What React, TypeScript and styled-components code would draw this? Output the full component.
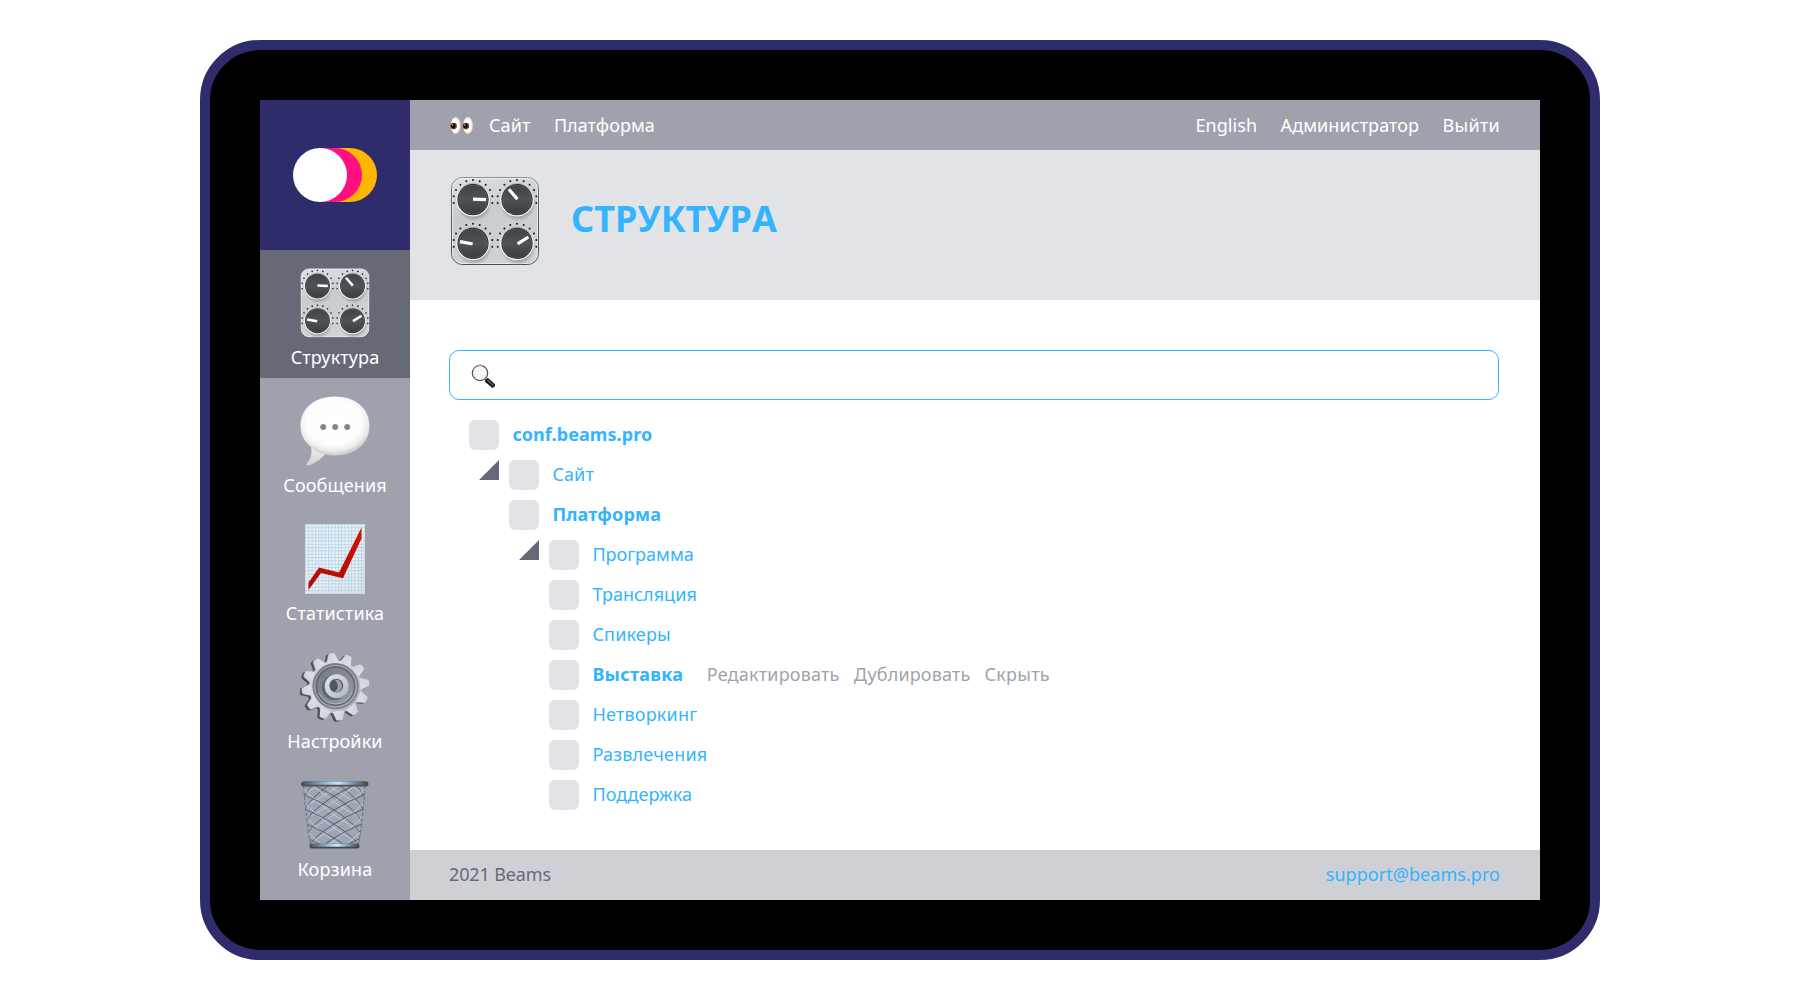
import React from 'react';
import styled, { createGlobalStyle } from 'styled-components';

const GlobalStyle = createGlobalStyle`
  * { box-sizing: border-box; }
  body {
    margin: 0;
    background: #fff;
    font-family: 'Noto Sans', 'Open Sans', sans-serif;
    font-size: 18px;
    line-height: 30px;
  }
`;

const Stage = styled.div`
  height: 1000px;
  display: flex;
  align-items: center;
  justify-content: center;
`;

const Tablet = styled.div`
  width: 1400px;
  height: 920px;
  padding: 50px;
  border: 10px solid #2e2c6b;
  border-radius: 60px;
  background: #000;
`;

const Screen = styled.div`
  width: 100%;
  height: 100%;
  display: flex;
  background: #fff;
`;

const Sidebar = styled.nav`
  width: 150px;
  background: #9fa2ad;
`;

const LogoBox = styled.div`
  height: 150px;
  display: flex;
  align-items: center;
  justify-content: center;
  background: #2e2c6b;
`;

const SideItem = styled.a<{ $active?: boolean }>`
  height: 128px;
  display: flex;
  flex-direction: column;
  align-items: center;
  padding-top: 18px;
  color: #fff;
  background: ${(p) => (p.$active ? '#656a76' : 'transparent')};
`;

const Text = styled.span<{ $track?: number }>`
  letter-spacing: ${(p) => p.$track ?? 0}px;
`;

const SideLabel = styled(Text)`
  margin-top: 4px;
`;

const Main = styled.div`
  flex: 1;
  display: flex;
  flex-direction: column;
`;

const TopBar = styled.div`
  height: 50px;
  padding: 0 40px 0 39px;
  display: flex;
  align-items: center;
  justify-content: space-between;
  color: #fff;
  background: #9fa2ad;
`;

const Links = styled.div`
  display: flex;
  align-items: center;
  gap: 23.4px;
`;

const SiteLink = styled.a`
  display: flex;
  align-items: center;
  gap: 15px;
`;

const Header = styled.header`
  height: 150px;
  padding: 27px 40px 0 41px;
  display: flex;
  align-items: flex-start;
  background: #e2e3e7;
`;

const Title = styled.h1`
  margin: 18px 0 0 32px;
  font-size: 36px;
  line-height: 48px;
  font-weight: 700;
  font-kerning: none;
  color: #34b3ff;
`;

const Content = styled.main`
  flex: 1;
  padding: 50px 41px 0 39px;
`;

const Search = styled.div`
  height: 50px;
  padding: 2px 0 0 21px;
  display: flex;
  align-items: center;
  border: 1px solid #34b3ff;
  border-radius: 10px;
`;

const Tree = styled.div`
  padding: 20px 0 0 20px;
`;

const Branch = styled.div`
  padding-left: 40px;
`;

const Row = styled.div`
  height: 30px;
  margin-bottom: 10px;
  display: flex;
  line-height: 28px;
`;

const Toggle = styled.div`
  width: 20px;
  height: 20px;
  margin: 0 10px 0 -30px;
  background: #656a76;
  clip-path: polygon(100% 0, 100% 100%, 0 100%);
`;

const Box = styled.div`
  width: 30px;
  height: 30px;
  border-radius: 6px;
  background: #e2e3e7;
`;

const NodeLink = styled(Text)<{ $bold?: boolean }>`
  margin-left: 13.4px;
  color: #34b3ff;
  font-weight: ${(p) => (p.$bold ? 700 : 400)};
`;

const Actions = styled.div`
  display: flex;
  gap: 14px;
  margin-left: 23.4px;
  color: #9fa2ad;
`;

const Footer = styled.footer`
  height: 50px;
  padding: 0 40px 2px 39px;
  display: flex;
  align-items: center;
  justify-content: space-between;
  color: #656a76;
  background: #cfd0d6;
`;

const Mail = styled(Text)`
  color: #34b3ff;
`;

const Logo = () => (
  <svg width="84" height="54" viewBox="0 0 84 54">
    <path d="M27 0H57a27 27 0 0 1 0 54H27z" fill="#ffb600" />
    <path d="M27 0H42a27 27 0 0 1 0 54H27z" fill="#ff0f80" />
    <circle cx="27" cy="27" r="27" fill="#fff" />
  </svg>
);

const KNOBS = [
  { x: 22, y: 22.7, from: [0, -0.6], to: [13, 0] },
  { x: 66, y: 22.7, from: [0.4, -0.6], to: [-8.2, -10.4] },
  { x: 22, y: 66.4, from: [-0.4, 0.6], to: [-13, -1.8] },
  { x: 66, y: 66.4, from: [0.6, 0.4], to: [11.4, -6.4] },
];
const DOTS = Array.from({ length: 11 }, (_, i) => ((170 + i * 20) * Math.PI) / 180);

const Knobs = ({ size }: { size: number }) => (
  <svg width={size} height={size} viewBox="0 0 88 88">
    <defs>
      <linearGradient id={`panel${size}`} x1="0" y1="0" x2="0.25" y2="1">
        <stop offset="0" stopColor="#dde2e6" />
        <stop offset="0.45" stopColor="#c6ccd0" />
        <stop offset="1" stopColor="#cdd3d6" />
      </linearGradient>
      <linearGradient id={`edge${size}`} x1="0" y1="0" x2="0" y2="1">
        <stop offset="0" stopColor="#8791a0" />
        <stop offset="0.12" stopColor="#626a76" />
        <stop offset="1" stopColor="#4b4d4e" />
      </linearGradient>
      <linearGradient id={`knob${size}`} x1="0" y1="0" x2="0" y2="1">
        <stop offset="0" stopColor="#3f4347" />
        <stop offset="0.5" stopColor="#4f5357" />
        <stop offset="1" stopColor="#393d40" />
      </linearGradient>
      <linearGradient id={`rim${size}`} x1="0" y1="0" x2="0" y2="1">
        <stop offset="0" stopColor="#a9aeb2" />
        <stop offset="0.4" stopColor="#f5f7f8" />
        <stop offset="1" stopColor="#ffffff" />
      </linearGradient>
      <radialGradient id={`shade${size}`}>
        <stop offset="0.65" stopColor="#7b8286" stopOpacity="0.9" />
        <stop offset="1" stopColor="#9ba2a6" stopOpacity="0" />
      </radialGradient>
    </defs>
    <rect x="0.5" y="0.5" width="87" height="87" rx="11" fill={`url(#panel${size})`} stroke={`url(#edge${size})`} />
    <rect x="1.5" y="1.5" width="85" height="85" rx="10" fill="none" stroke="#fff" strokeOpacity="0.55" />
    {KNOBS.map((k) => (
      <g key={`${k.x}-${k.y}`}>
        <ellipse cx={k.x + 1} cy={k.y + 4} rx="18" ry="18" fill={`url(#shade${size})`} />
        {DOTS.map((a) => (
          <circle key={a} cx={k.x + 19.6 * Math.cos(a)} cy={k.y + 19.6 * Math.sin(a)} r="1" fill="#15181a" />
        ))}
        <circle cx={k.x} cy={k.y} r="16.8" fill={`url(#rim${size})`} />
        <circle cx={k.x} cy={k.y} r="15.6" fill="#202326" />
        <circle cx={k.x} cy={k.y} r="14.6" fill={`url(#knob${size})`} stroke="#666b6f" strokeWidth="0.6" />
        <line
          x1={k.x + k.from[0]}
          y1={k.y + k.from[1]}
          x2={k.x + k.to[0]}
          y2={k.y + k.to[1]}
          stroke="#fff"
          strokeWidth="3.2"
        />
      </g>
    ))}
  </svg>
);

const Bubble = () => (
  <svg width="70" height="70" viewBox="0 0 70 70">
    <defs>
      <radialGradient id="bubble" cx="0.48" cy="0.42" r="0.58">
        <stop offset="0" stopColor="#fff" />
        <stop offset="0.68" stopColor="#fdfdfd" />
        <stop offset="0.86" stopColor="#ededed" />
        <stop offset="1" stopColor="#c9c9ca" />
      </radialGradient>
      <linearGradient id="tail" x1="0" y1="0" x2="0" y2="1">
        <stop offset="0" stopColor="#efefef" />
        <stop offset="1" stopColor="#d2d2d3" />
      </linearGradient>
    </defs>
    <path d="M11 50C12.5 58 10.5 63.5 6.5 68c-.7 1 0 1.700 1 1.500C15 68 22 62.500 26 57z" fill="url(#tail)" />
    <path
      d="M35 .5C55 .5 69.500 12 69.500 30S55 59.500 35 59.500C31.500 59.500 28 59 25 58.200 20 57 15 55 11 51 4 45.500 .5 38.500 .5 30 .5 12 15 .5 35 .5z"
      fill="url(#bubble)"
    />
    <g fill="#858585" stroke="#747474" strokeWidth="0.5">
      <circle cx="23.200" cy="31" r="2.700" />
      <circle cx="35.200" cy="31" r="2.700" />
      <circle cx="47.200" cy="31" r="2.700" />
    </g>
  </svg>
);

const Chart = () => (
  <svg width="70" height="70" viewBox="0 0 70 70">
    <defs>
      <linearGradient id="paper" x1="0" y1="0" x2="1" y2="1">
        <stop offset="0" stopColor="#e6f2fb" />
        <stop offset="0.5" stopColor="#f0f5f9" />
        <stop offset="1" stopColor="#e3e6e9" />
      </linearGradient>
      <linearGradient id="trend" x1="0" y1="0" x2="0" y2="1">
        <stop offset="0" stopColor="#d01405" />
        <stop offset="1" stopColor="#b30a02" />
      </linearGradient>
      <pattern id="grid" x="5" y="0" width="3.300" height="3.300" patternUnits="userSpaceOnUse">
        <path d="M0 .5H3.300M.5 0V3.300" stroke="#b9d4e9" strokeWidth="0.9" />
      </pattern>
    </defs>
    <rect x="5.200" y="0" width="59.500" height="69.700" fill="url(#paper)" />
    <rect x="5.200" y="0" width="59.500" height="69.700" fill="url(#grid)" />
    <rect x="5.600" y=".4" width="58.700" height="68.900" fill="none" stroke="#d4dade" strokeWidth="0.8" />
    <path
      d="M8.500 58.500 19 43.500 39 48.500 61.500 3.500V14.500L43 54.200 21 49 8.500 66z"
      fill="url(#trend)"
    />
  </svg>
);

const TEETH = Array.from({ length: 12 }, (_, i) => -7 + i * 30);

const GearShape = ({ fill }: { fill: string }) => (
  <g fill={fill}>
    <circle cx="36" cy="35" r="26.500" />
    {TEETH.map((a) => (
      <path
        key={a}
        d="M30 10.500 32.600 2.500Q33 1.200 34.300 1.200H37.700Q39 1.200 39.400 2.500L42 10.500z"
        transform={`rotate(${a} 36 35)`}
      />
    ))}
  </g>
);

const Gear = () => (
  <svg width="70" height="70" viewBox="0 0 70 70">
    <defs>
      <linearGradient id="gear" gradientUnits="userSpaceOnUse" x1="12" y1="18" x2="62" y2="52">
        <stop offset="0" stopColor="#c3c8d0" />
        <stop offset="0.3" stopColor="#dcdfe6" />
        <stop offset="0.7" stopColor="#b9bec8" />
        <stop offset="1" stopColor="#a6abb7" />
      </linearGradient>
      <linearGradient id="well" x1="0" y1="0" x2="1" y2="1">
        <stop offset="0" stopColor="#73787e" />
        <stop offset="0.6" stopColor="#898e95" />
        <stop offset="1" stopColor="#a0a5ac" />
      </linearGradient>
      <linearGradient id="hub" x1="0" y1="0" x2="1" y2="1">
        <stop offset="0" stopColor="#dfe3eb" />
        <stop offset="0.6" stopColor="#c6ccd8" />
        <stop offset="1" stopColor="#a4adbb" />
      </linearGradient>
    </defs>
    <g transform="translate(-2.800 1)">
      <GearShape fill="#4b4643" />
    </g>
    <g transform="translate(-1.500 .4)">
      <GearShape fill="#666a70" />
    </g>
    <g transform="translate(-.4 -.2)">
      <GearShape fill="url(#gear)" />
    </g>
    <circle cx="35.500" cy="34.200" r="22.600" fill="url(#well)" stroke="#6b7179" strokeWidth="0.9" />
    <circle cx="35.500" cy="34.200" r="20.800" fill="none" stroke="#a3a8af" strokeWidth="1" />
    <circle cx="35.500" cy="34.200" r="19" fill="none" stroke="#5f646b" strokeWidth="1.300" />
    <path d="M19 41A18 18 0 0 0 52 41" fill="none" stroke="#b9bec5" strokeWidth="0.8" />
    <circle cx="34.500" cy="35.500" r="12.600" fill="#5f656c" />
    <circle cx="36.700" cy="34.300" r="12" fill="url(#hub)" />
    <circle cx="36.300" cy="33.600" r="6.900" fill="#4e5661" />
    <path d="M34.500 27.600a6.400 6.400 0 1 1-.5 12.500c4.500-2.500 5.500-8 .5-12.500z" fill="#9fa2ad" />
  </svg>
);

const MESH = [-1, 0, 1, 2, 3, 4, 5, 6, 7, 8, 9, 10];

const Basket = () => (
  <svg width="70" height="70" viewBox="0 0 70 70">
    <defs>
      <linearGradient id="rimTop" x1="0" y1="0" x2="1" y2="0">
        <stop offset="0" stopColor="#4d5056" />
        <stop offset="0.3" stopColor="#83a9d0" />
        <stop offset="0.55" stopColor="#c8eaff" />
        <stop offset="0.8" stopColor="#6f8fae" />
        <stop offset="1" stopColor="#49443f" />
      </linearGradient>
      <clipPath id="bin">
        <path d="M3.500 5H65Q63 38 58.500 65H10.500Q6 38 3.500 5z" />
      </clipPath>
    </defs>
    <path d="M3.500 5H65Q63 38 58.500 65H10.500Q6 38 3.500 5z" fill="#b5bec9" fillOpacity="0.15" />
    <g clipPath="url(#bin)" fill="none">
      {MESH.map((i) => (
        <g key={i}>
          <path d={`M0 ${i * 13 + 2}Q34 ${i * 13 - 12} 68 ${i * 13 - 46}`} stroke="#b9d0e2" strokeWidth="0.9" />
          <path d={`M68 ${i * 13 + 2}Q34 ${i * 13 - 12} 0 ${i * 13 - 46}`} stroke="#b9d0e2" strokeWidth="0.9" />
          <path d={`M4 ${i * 14 + 2}Q18 ${i * 14 - 22} 66 ${i * 14 - 42}`} stroke="#4a515b" strokeWidth="0.9" />
          <path d={`M64 ${i * 14 + 2}Q50 ${i * 14 - 22} 2 ${i * 14 - 42}`} stroke="#4f5e6e" strokeWidth="0.9" />
        </g>
      ))}
    </g>
    <path
      d="M3.500 5Q6 38 10.500 65M65 5Q63 38 58.500 65"
      stroke="#596c7d"
      strokeWidth="0.9"
      fill="none"
      strokeDasharray="4 1.500"
    />
    <rect x="9.500" y="63.800" width="50" height="4.600" rx="2" fill="#4a4540" />
    <rect x="10" y="63.800" width="49" height="3" rx="1.400" fill="url(#rimTop)" />
    <rect x="1" y="1.600" width="67.500" height="5" rx="2.500" fill="#544f4c" />
    <rect x="2" y="1.600" width="65.500" height="3.200" rx="1.500" fill="url(#rimTop)" />
  </svg>
);

const Eyes = () => (
  <svg width="25" height="20" viewBox="0 0 25 20">
    <defs>
      <radialGradient id="white" cx="0.45">
        <stop offset="0.7" stopColor="#fff" />
        <stop offset="1" stopColor="#dcdcde" />
      </radialGradient>
    </defs>
    {[0, 12.3].map((x) => (
      <g key={x} transform={`translate(${x} .6)`}>
        <ellipse cx="6.700" cy="10" rx="4.900" ry="8.500" fill="url(#white)" />
        <circle cx="4.600" cy="10.500" r="3.300" fill="#80480f" />
        <circle cx="4.300" cy="10.300" r="2.300" fill="#160b06" />
        <circle cx="3.500" cy="9.300" r=".8" fill="#b8aaa0" />
      </g>
    ))}
  </svg>
);

const Lens = () => (
  <svg width="25" height="25" viewBox="0 0 25 25">
    <path d="M13.800 16 16.800 13.700 24 20.300Q24.500 22.800 21.500 23.900L14.200 18z" fill="#15191d" />
    <path d="M16.400 15.900 22.300 21.500" stroke="#6b747b" strokeWidth="1.100" />
    <circle cx="9" cy="9" r="7.700" fill="#f4f5f6" stroke="#4d5256" strokeWidth="1.200" />
    <path d="M2.200 6A7.700 7.700 0 0 1 12 1.700" fill="none" stroke="#8aa8bd" strokeWidth="1" />
  </svg>
);

const SECTIONS = [
  { label: 'Структура', track: 0.12, icon: <Knobs size={70} />, active: true },
  { label: 'Сообщения', track: 0.12, icon: <Bubble /> },
  { label: 'Статистика', track: 0.17, icon: <Chart /> },
  { label: 'Настройки', track: 0.12, icon: <Gear /> },
  { label: 'Корзина', track: 0.2, icon: <Basket /> },
];

const ACTIONS = [
  { label: 'Редактировать', track: 0.2 },
  { label: 'Дублировать', track: 0.16 },
  { label: 'Скрыть', track: 0.25 },
];

type NodeProps = { label: string; track?: number; bold?: boolean; toggle?: boolean; actions?: typeof ACTIONS };

const TreeNode = ({ label, track, bold, toggle, actions }: NodeProps) => (
  <Row>
    {toggle && <Toggle />}
    <Box />
    <NodeLink as="a" $bold={bold} $track={track}>
      {label}
    </NodeLink>
    {actions && (
      <Actions>
        {actions.map((a) => (
          <Text as="a" key={a.label} $track={a.track}>
            {a.label}
          </Text>
        ))}
      </Actions>
    )}
  </Row>
);

export default function App() {
  return (
    <>
      <GlobalStyle />
      <Stage>
        <Tablet>
          <Screen>
            <Sidebar>
              <LogoBox>
                <Logo />
              </LogoBox>
              {SECTIONS.map((s) => (
                <SideItem key={s.label} $active={s.active}>
                  {s.icon}
                  <SideLabel $track={s.track}>{s.label}</SideLabel>
                </SideItem>
              ))}
            </Sidebar>
            <Main>
              <TopBar>
                <Links>
                  <SiteLink>
                    <Eyes />
                    <Text $track={0.1}>Сайт</Text>
                  </SiteLink>
                  <Text as="a" $track={0.05}>Платформа</Text>
                </Links>
                <Links>
                  <Text as="a" $track={0.08}>English</Text>
                  <Text as="a" $track={0.08}>Администратор</Text>
                  <Text as="a" $track={0.28}>Выйти</Text>
                </Links>
              </TopBar>
              <Header>
                <Knobs size={88} />
                <Title>СТРУКТУРА</Title>
              </Header>
              <Content>
                <Search>
                  <Lens />
                </Search>
                <Tree>
                  <TreeNode label="conf.beams.pro" bold track={0.08} />
                  <Branch>
                    <TreeNode label="Сайт" toggle track={0.1} />
                    <TreeNode label="Платформа" bold track={0.14} />
                    <Branch>
                      <TreeNode label="Программа" toggle />
                      <TreeNode label="Трансляция" track={0.06} />
                      <TreeNode label="Спикеры" track={0.17} />
                      <TreeNode label="Выставка" bold track={0.28} actions={ACTIONS} />
                      <TreeNode label="Нетворкинг" track={0.2} />
                      <TreeNode label="Развлечения" track={0.2} />
                      <TreeNode label="Поддержка" track={0.05} />
                    </Branch>
                  </Branch>
                </Tree>
              </Content>
              <Footer>
                <Text $track={-0.14}>2021 Beams</Text>
                <Mail as="a" $track={0.04}>support@beams.pro</Mail>
              </Footer>
            </Main>
          </Screen>
        </Tablet>
      </Stage>
    </>
  );
}
